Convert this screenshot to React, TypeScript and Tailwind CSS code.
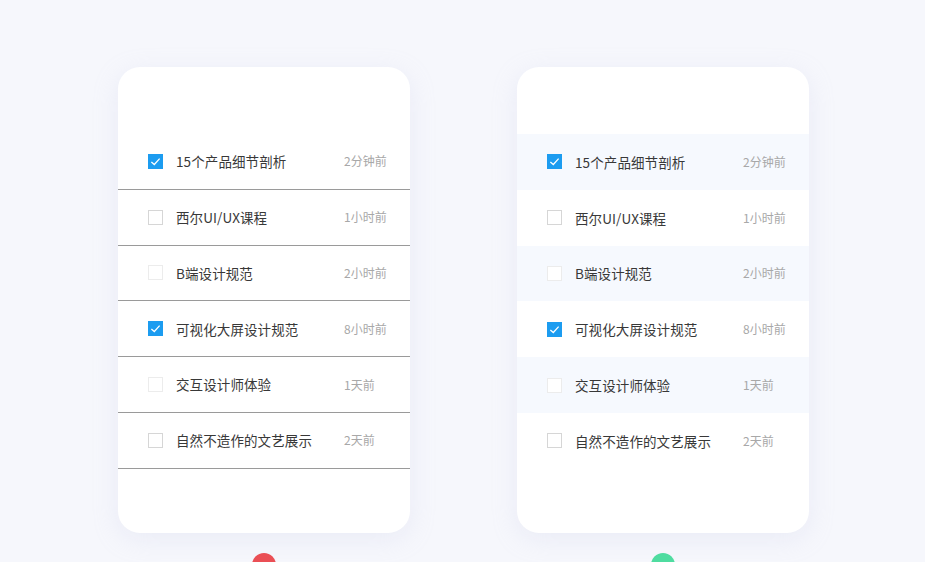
import React from "react";

type Item = { title: string; time: string; checked: boolean; faint?: boolean };

const items: Item[] = [
  { title: "15个产品细节剖析", time: "2分钟前", checked: true },
  { title: "西尔UI/UX课程", time: "1小时前", checked: false },
  { title: "B端设计规范", time: "2小时前", checked: false, faint: true },
  { title: "可视化大屏设计规范", time: "8小时前", checked: true },
  { title: "交互设计师体验", time: "1天前", checked: false, faint: true },
  { title: "自然不造作的文艺展示", time: "2天前", checked: false },
];

const Checkbox = ({ checked, faint }: { checked: boolean; faint?: boolean }) =>
  checked ? (
    <span className="w-[15px] h-[15px] bg-[#1c9cf0] flex items-center justify-center shrink-0">
      <svg width="11" height="11" viewBox="0 0 12 12" fill="none">
        <path d="M1.5 6.5 L4.7 9.3 L10.5 2.8" stroke="#fff" strokeWidth="1.4" />
      </svg>
    </span>
  ) : (
    <span
      className={`w-[15px] h-[15px] border bg-white shrink-0 ${
        faint ? "border-[#ececec]" : "border-[#d6d6d6]"
      }`}
    />
  );

const Card = ({ striped }: { striped?: boolean }) => (
  <div className="w-[292px] h-[466px] shrink-0 bg-white rounded-[22px] shadow-[0_6px_24px_rgba(200,205,230,0.25)] pt-[67px]">
    {items.map((item, i) => (
      <div
        key={item.title}
        className={`h-[55.8px] flex items-center pl-[30px] ${
          striped
            ? i % 2 === 0
              ? "bg-[#f6f9fe]"
              : "bg-white"
            : "border-b border-[#9a9a9a]"
        }`}
      >
        <Checkbox checked={item.checked} faint={item.faint} />
        <span className="ml-[13px] w-[168px] text-[13.5px] text-[#383838] tracking-[0.1px]">
          {item.title}
        </span>
        <span className="text-[12px] text-[#a8a8a8]">{item.time}</span>
      </div>
    ))}
  </div>
);

export default function App() {
  return (
    <div
      className="w-[925px] h-[562px] overflow-hidden bg-[#f6f7fc] pt-[67px] pl-[118px] flex gap-[107px]"
      style={{ fontFamily: '"Noto Sans CJK SC", "Noto Sans", sans-serif' }}
    >
      <div className="flex flex-col items-center shrink-0">
        <Card />
        <span className="mt-[20px] w-[24px] h-[24px] shrink-0 rounded-full bg-[#ea4f55]" />
      </div>
      <div className="flex flex-col items-center shrink-0">
        <Card striped />
        <span className="mt-[20px] w-[24px] h-[24px] shrink-0 rounded-full bg-[#4fdca0]" />
      </div>
    </div>
  );
}
